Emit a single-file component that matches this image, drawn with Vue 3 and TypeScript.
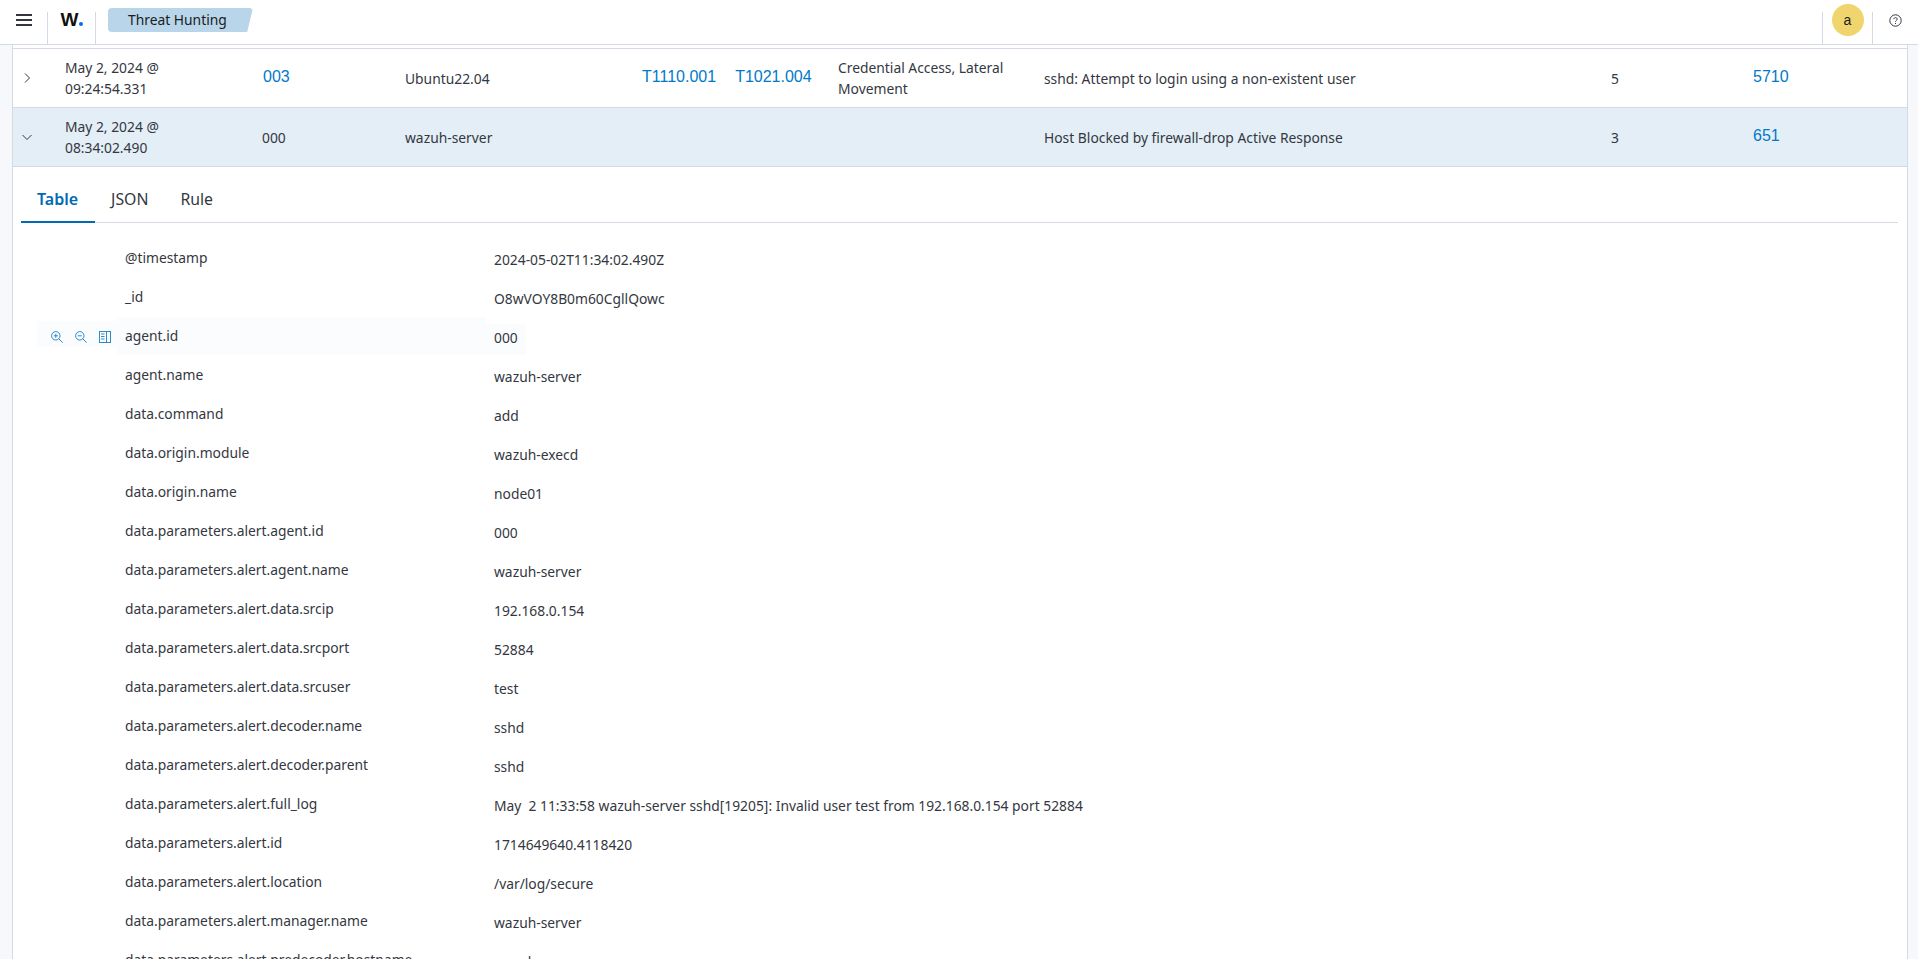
<script setup lang="ts">
const fields: [string, string][] = [
  ['@timestamp', '2024-05-02T11:34:02.490Z'],
  ['_id', 'O8wVOY8B0m60CgllQowc'],
  ['agent.id', '000'],
  ['agent.name', 'wazuh-server'],
  ['data.command', 'add'],
  ['data.origin.module', 'wazuh-execd'],
  ['data.origin.name', 'node01'],
  ['data.parameters.alert.agent.id', '000'],
  ['data.parameters.alert.agent.name', 'wazuh-server'],
  ['data.parameters.alert.data.srcip', '192.168.0.154'],
  ['data.parameters.alert.data.srcport', '52884'],
  ['data.parameters.alert.data.srcuser', 'test'],
  ['data.parameters.alert.decoder.name', 'sshd'],
  ['data.parameters.alert.decoder.parent', 'sshd'],
  ['data.parameters.alert.full_log', 'May  2 11:33:58 wazuh-server sshd[19205]: Invalid user test from 192.168.0.154 port 52884'],
  ['data.parameters.alert.id', '1714649640.4118420'],
  ['data.parameters.alert.location', '/var/log/secure'],
  ['data.parameters.alert.manager.name', 'wazuh-server'],
  ['data.parameters.alert.predecoder.hostname', 'wazuh-server'],
]
</script>

<template>
  <div class="page">
    <header class="topbar">
      <button class="cell menu" aria-label="menu">
        <svg width="16" height="12" viewBox="0 0 16 12"><path d="M0 1h16M0 6h16M0 11h16" stroke="#343741" stroke-width="2" fill="none" /></svg>
      </button>
      <div class="cell logo"><span class="logo-w">W</span><span class="logo-dot"></span></div>
      <div class="crumb">Threat Hunting</div>
      <div class="spacer"></div>
      <div class="cell user"><span class="avatar">a</span></div>
      <div class="cell help">
        <svg width="13" height="13" viewBox="0 0 13 13" fill="none" stroke="#343741">
          <circle cx="6.5" cy="6.5" r="5.7" />
          <path d="M4.8 5.2c0-1 .8-1.6 1.7-1.6s1.7.6 1.7 1.5c0 1.3-1.7 1.3-1.7 2.6" />
          <path d="M6.5 9v1" />
        </svg>
      </div>
    </header>

    <main class="panel">
      <div class="row">
        <span class="chev">
          <svg width="12" height="12" viewBox="0 0 12 12"><path d="M4 1.5 8.5 6 4 10.5" fill="none" stroke="#343741" stroke-width="1" /></svg>
        </span>
        <span>May 2, 2024 @<br />09:24:54.331</span>
        <span><a class="link">003</a></span>
        <span>Ubuntu22.04</span>
        <span class="techs"><a class="link">T1110.001</a><a class="link">T1021.004</a></span>
        <span>Credential Access, Lateral Movement</span>
        <span>sshd: Attempt to login using a non-existent user</span>
        <span>5</span>
        <span><a class="link">5710</a></span>
      </div>
      <div class="row selected">
        <span class="chev">
          <svg width="12" height="12" viewBox="0 0 12 12"><path d="M1.5 4 6 8.5 10.5 4" fill="none" stroke="#343741" stroke-width="1" /></svg>
        </span>
        <span>May 2, 2024 @<br />08:34:02.490</span>
        <span>000</span>
        <span>wazuh-server</span>
        <span></span>
        <span></span>
        <span>Host Blocked by firewall-drop Active Response</span>
        <span>3</span>
        <span><a class="link">651</a></span>
      </div>

      <section class="details">
        <nav class="tabs">
          <span class="tab active">Table</span>
          <span class="tab">JSON</span>
          <span class="tab">Rule</span>
        </nav>
        <div class="fields">
          <div v-for="f in fields" :key="f[0]" class="field" :class="{ hover: f[0] === 'agent.id' }">
            <div class="actions">
              <template v-if="f[0] === 'agent.id'">
                <svg width="12" height="12" viewBox="0 0 12 12" fill="none" stroke="#2f8ac9">
                  <circle cx="4.8" cy="4.8" r="4.2" /><path d="M7.8 7.8 11.6 11.6M2.8 4.8h4M4.8 2.8v4" />
                </svg>
                <svg width="12" height="12" viewBox="0 0 12 12" fill="none" stroke="#2f8ac9">
                  <circle cx="4.8" cy="4.8" r="4.2" /><path d="M7.8 7.8 11.6 11.6M2.8 4.8h4" />
                </svg>
                <svg width="12" height="12" viewBox="0 0 12 12" fill="none" stroke="#2f8ac9">
                  <rect x=".5" y=".5" width="11" height="11" /><path d="M7.5 .5v11M2 3h3.5M2 5.5h3.5M2 8h3.5" />
                </svg>
              </template>
            </div>
            <div class="name">{{ f[0] }}</div>
            <div class="value"><span>{{ f[1] }}</span></div>
          </div>
        </div>
      </section>
    </main>
  </div>
</template>

<style>
html, body { margin: 0; overflow: hidden; }
</style>

<style scoped>
.page {
  height: 100vh;
  overflow: hidden;
  background: #f7f8fc;
  color: #343741;
  font: 13.83px/21px "Noto Sans", sans-serif;
  display: flex;
  flex-direction: column;
}
.topbar {
  flex: none;
  height: 44px;
  background: #fff;
  border-bottom: 1px solid #d3dae6;
  display: flex;
  align-items: flex-start;
}
.cell {
  height: 32px;
  margin-top: 12px;
  box-sizing: border-box;
  display: flex;
  align-items: center;
  justify-content: center;
}
.menu {
  width: 48px;
  padding: 0 0 16px;
  background: none;
  border: 0;
  border-right: 1px solid #d3dae6;
  border-radius: 0;
}
.logo {
  width: 48px;
  border-right: 1px solid #d3dae6;
  padding-bottom: 14px;
  align-items: flex-end;
  padding-left: 1px;
}
.logo-w {
  font: 700 19px/20px "Liberation Sans", sans-serif;
  color: #111;
}
.logo-dot {
  width: 4px;
  height: 4px;
  margin: 0 0 4px 1px;
  border-radius: 50%;
  background: #0a6cf5;
}
.crumb {
  margin: 8px 0 0 12px;
  width: 145px;
  height: 24px;
  box-sizing: border-box;
  padding-left: 20px;
  background: #b8d5e9;
  color: #1a1c21;
  line-height: 24px;
  border-radius: 4px;
  clip-path: polygon(0 0, 100% 0, 96% 100%, 0 100%);
}
.spacer { flex: 1; }
.user {
  width: 51px;
  border-left: 1px solid #d3dae6;
  border-right: 1px solid #d3dae6;
  align-items: flex-start;
}
.avatar {
  width: 32px;
  height: 32px;
  margin-top: -8px;
  border-radius: 50%;
  background: #f0d56e;
  color: #1a1c21;
  font: 14px/32px "Liberation Sans", sans-serif;
  text-align: center;
}
.help {
  width: 45px;
  padding: 0 0 16px;
}
.panel {
  flex: 1;
  min-height: 0;
  margin: 0 10px 0 12px;
  padding-top: 3px;
  background: #fff;
  border-left: 1px solid #d3dae6;
  border-right: 1px solid #d3dae6;
}
.row {
  height: 58px;
  display: grid;
  grid-template-columns: 52px 197px 143px 237px 196px 206px 567px 141px 1fr;
  align-items: center;
  border-top: 1px solid #d3dae6;
}
.row > span { display: block; padding-right: 24px; }
.row.selected {
  background: #e3eef6;
  border-bottom: 1px solid #d3dae6;
}
.chev { padding: 0 0 0 8px !important; line-height: 12px; }
.link {
  color: #0079c9;
  font: 16px/21px "Liberation Sans", sans-serif;
  position: relative;
  top: -2px;
  margin-left: 1px;
}
.row > span.techs { display: flex; gap: 19px; padding: 0; }
.techs .link { margin-left: 0; }
.details { margin: 0 9px 0 8px; }
.tabs {
  margin-top: 9px;
  height: 46px;
  display: flex;
  border-bottom: 1px solid #d3dae6;
}
.tab {
  padding: 0 16px;
  font-size: 15.8px;
  line-height: 46px;
  height: 46px;
  box-sizing: border-box;
}
.tab.active {
  color: #006bb4;
  font-size: 16px;
  font-weight: 600;
  padding-right: 17px;
  border-bottom: 2px solid #006bb4;
  height: 47px;
}
.fields { margin-top: 16px; }
.field {
  height: 39px;
  display: grid;
  grid-template-columns: 80px 369px 1fr;
  margin-left: 16px;
}
.actions {
  display: flex;
  align-items: center;
  justify-content: flex-end;
  gap: 12px;
  padding: 6px 6px 0 0;
  height: 26px;
  box-sizing: border-box;
  margin-top: 4px;
}
.hover .actions { background: #fbfcfd; }
.name {
  padding: 8px 0 0 8px;
  line-height: 21px;
  height: 37px;
  box-sizing: border-box;
  white-space: nowrap;
}
.hover .name { background: #fbfcfd; }
.value {
  padding: 7px 0 0 0;
  white-space: pre;
}
.value span {
  display: inline-block;
  padding: 2px 8px 5px;
  line-height: 24px;
}
.hover .value span { background: #fbfcfd; min-width: 24px; }
</style>
